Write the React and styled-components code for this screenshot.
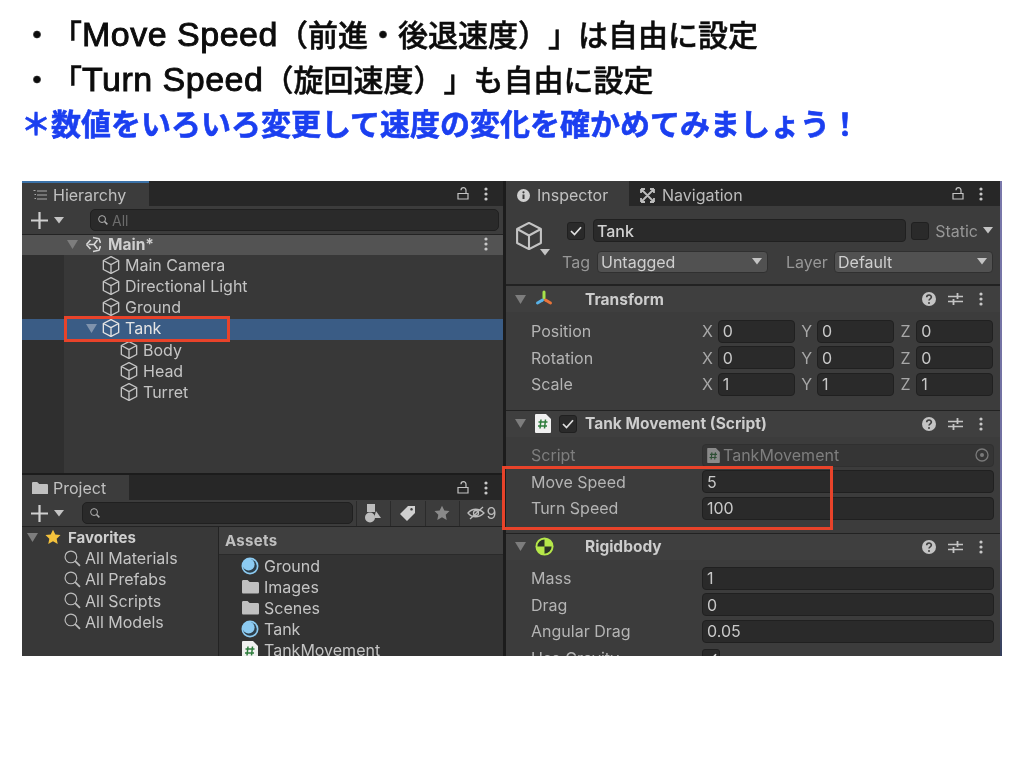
import React from 'react'
import styled, { createGlobalStyle } from 'styled-components'

const Global = createGlobalStyle`
  html, body { margin: 0; padding: 0; background: #fff; }
  body { width: 1024px; height: 768px; overflow: hidden; }
`

const Page = styled.div`
  display: flex;
  flex-direction: column;
  width: 1024px;
  height: 768px;
  padding: 11px 22px 0;
  box-sizing: border-box;
`

const Notes = styled.div`
  height: 170px;
  font-family: "Noto Sans CJK JP", sans-serif;
  font-size: 30px;
  line-height: 44.3px;
  font-weight: 500;
  color: #0c0c0c;
  white-space: nowrap;
  text-spacing-trim: space-all;
  filter: blur(0.3px);
`

const NoteLine = styled.div`
  -webkit-text-stroke: 0.5px #0c0c0c;
`

const Latin = styled.span`
  font-family: "Liberation Sans", sans-serif;
  font-size: 34px;
  letter-spacing: 0.5px;
  -webkit-text-stroke: 0.9px #0c0c0c;
`

const BlueLine = styled.div`
  margin-top: -2px;
  margin-left: -1px;
  font-weight: 700;
  color: #1b3ff0;
  -webkit-text-stroke: 0.6px #1b3ff0;
`

const Editor = styled.div`
  display: grid;
  grid-template-columns: 481px 3px 494px 2px;
  width: 980px;
  height: 475px;
  overflow: hidden;
  background: #191919;
  font-family: Inter, "Liberation Sans", sans-serif;
  font-size: 16px;
  color: #c4c4c4;
  filter: blur(0.4px);
`

const Column = styled.div`
  display: flex;
  flex-direction: column;
  min-width: 0;
`

const Splitter = styled.div`
  background: #1c1c1c;
`

const RightEdge = styled.div`
  background: linear-gradient(180deg, #7a78ab 0%, #6f6e9e 70%, #2f3a55 100%);
`

const TabBar = styled.div`
  display: flex;
  align-items: stretch;
  height: 25px;
  flex: none;
  background: #272727;
  border-top: ${p => (p.$line ? '2px solid #1c1c1c' : '0')};
`

const Tab = styled.div`
  display: flex;
  align-items: center;
  gap: ${p => p.$gap || 5}px;
  width: ${p => p.$w}px;
  padding-left: ${p => p.$pad || 10}px;
  padding-top: ${p => p.$pt || 1}px;
  box-sizing: border-box;
  background: ${p => (p.$active ? '#3c3c3c' : 'transparent')};
  border-top: ${p => (p.$blue ? '2px solid #3b72a8' : '0')};
  color: ${p => (p.$active ? '#c0c0c0' : '#bcbcbc')};
  font-size: 16px;
`

const TabActions = styled.div`
  display: flex;
  align-items: center;
  gap: 15px;
  margin-left: auto;
  padding-right: ${p => p.$pr || 15}px;
`

const ToolBar = styled.div`
  display: flex;
  align-items: center;
  height: ${p => p.$h}px;
  flex: none;
  background: #3c3c3c;
  border-bottom: 1px solid #232323;
  box-sizing: border-box;
`

const AddButton = styled.div`
  display: flex;
  align-items: center;
  gap: 6px;
  width: ${p => p.$w}px;
  padding-left: 9px;
  box-sizing: border-box;
  flex: none;
`

const Search = styled.div`
  display: flex;
  align-items: center;
  gap: 4px;
  flex: 1;
  height: 20px;
  padding-left: 7px;
  margin-right: ${p => p.$mr}px;
  background: #2a2a2a;
  border: 1px solid #202020;
  border-radius: 5px;
  color: #6c6c6c;
  font-size: 14px;
`

const ToolIcon = styled.div`
  display: flex;
  align-items: center;
  justify-content: center;
  gap: 2px;
  width: ${p => p.$w || 34.5}px;
  height: 25px;
  box-sizing: border-box;
  flex: none;
  border-left: 1px solid #2b2b2b;
  color: #bbb;
`

const Tree = styled.div`
  height: 218px;
  flex: none;
  background: linear-gradient(90deg, #2f2f2f 42px, #383838 42px);
`

const SceneRow = styled.div`
  display: flex;
  align-items: center;
  height: 20px;
  padding-left: 45px;
  padding-bottom: 2px;
  box-sizing: border-box;
  gap: 7px;
  background: #535353;
  font-weight: 700;
  font-size: 15.5px;
  color: #cfcfcf;
`

const TreeRow = styled.div`
  position: relative;
  display: flex;
  align-items: center;
  height: 21.2px;
  padding-left: ${p => p.$indent}px;
  padding-bottom: 1.5px;
  box-sizing: border-box;
  gap: 5px;
  background: ${p => (p.$selected ? '#3a5c85' : 'transparent')};
  color: ${p => (p.$selected ? '#e4e4e4' : '#c4c4c4')};
`

const Highlight = styled.div`
  position: absolute;
  left: ${p => p.$l}px;
  top: ${p => p.$t}px;
  width: ${p => p.$w}px;
  height: ${p => p.$h}px;
  box-sizing: border-box;
  border: 3px solid #e8432a;
  pointer-events: none;
  z-index: 3;
`

const Project = styled.div`
  display: grid;
  grid-template-columns: 197px 1fr;
  flex: 1;
  min-height: 0;
  background: #383838;
`

const Favorites = styled.div`
  position: relative;
  background: #383838;
  border-right: 1px solid #232323;
`

const FavoriteHead = styled.div`
  display: flex;
  align-items: center;
  height: 20.6px;
  padding-left: 5px;
  gap: 7px;
  font-weight: 700;
  font-size: 15px;
  color: #cfcfcf;
`

const FavoriteRow = styled.div`
  display: flex;
  align-items: center;
  height: 21.2px;
  padding-left: 42px;
  gap: 4px;
`

const FavoriteFoot = styled.div`
  position: absolute;
  left: 0;
  right: 0;
  bottom: 0;
  height: 3px;
  background: #4a4a4a;
`

const AssetsHead = styled.div`
  display: flex;
  align-items: center;
  height: 28px;
  padding-left: 6px;
  background: #3f3f3f;
  border-bottom: 1px solid #2a2a2a;
  box-sizing: border-box;
  font-weight: 700;
  font-size: 15px;
  letter-spacing: 0.3px;
  color: #c0c0c0;
`

const AssetList = styled.div`
  height: 110px;
  background: #333;
`

const AssetRow = styled.div`
  display: flex;
  align-items: center;
  height: 21.2px;
  padding-left: 22px;
  gap: 5px;
`

const AssetIcon = styled.div`
  display: flex;
  justify-content: center;
  width: 18px;
  flex: none;
`

const Inspector = styled.div`
  flex: 1;
  background: #3c3c3c;
`

const ObjectHead = styled.div`
  display: flex;
  height: 79px;
  padding: 13px 7px 0 9px;
  box-sizing: border-box;
  border-bottom: 1px solid #222;
`

const ObjectIcon = styled.div`
  position: relative;
  width: 52px;
  height: 28px;
  margin-top: 3px;
  flex: none;
  color: #c4c4c4;
`

const IconCaret = styled.div`
  position: absolute;
  left: 25px;
  top: 27px;
`

const ObjectFields = styled.div`
  display: flex;
  flex-direction: column;
  flex: 1;
  gap: 8px;
`

const FieldLine = styled.div`
  display: flex;
  align-items: center;
  height: 23px;
`

const Check = styled.div`
  display: flex;
  align-items: center;
  justify-content: center;
  width: 18px;
  height: 18px;
  flex: none;
  background: #2a2a2a;
  border: 1px solid #202020;
  border-radius: 3px;
  box-sizing: border-box;
`

const NameInput = styled.div`
  display: flex;
  align-items: center;
  flex: 1;
  height: 23px;
  margin: 0 5px 0 8px;
  padding-left: 3px;
  background: #2a2a2a;
  border: 1px solid #202020;
  border-radius: 4px;
  box-sizing: border-box;
  font-weight: 500;
  color: #d2d2d2;
`

const Faint = styled.span`
  color: #979797;
  width: ${p => (p.$w ? `${p.$w}px` : 'auto')};
  margin-left: ${p => p.$ml || 0}px;
  margin-right: ${p => p.$mr || 0}px;
  flex: none;
`

const Dropdown = styled.div`
  display: flex;
  align-items: center;
  justify-content: space-between;
  width: ${p => p.$w}px;
  height: 22px;
  padding: 0 5px 0 3px;
  flex: none;
  background: #515151;
  border: 1px solid #303030;
  border-radius: 4px;
  box-sizing: border-box;
  color: #cfcfcf;
`

const CompHead = styled.div`
  display: flex;
  align-items: center;
  height: 27px;
  padding-left: 9px;
  background: #3f3f3f;
  border-top: 1px solid #222;
  box-sizing: border-box;
  font-weight: 700;
  font-size: 15.5px;
  color: #cdcdcd;
`

const CompIcons = styled.div`
  display: flex;
  align-items: center;
  width: 22px;
  gap: 8px;
  margin-left: 9px;
`

const CompTitle = styled.span`
  margin-left: 28px;
`

const CompActions = styled.div`
  display: flex;
  align-items: center;
  gap: 12px;
  margin-left: auto;
  padding-right: 17px;
`

const ActionDots = styled.div`
  margin-left: 4px;
`

const Body = styled.div`
  display: flex;
  flex-direction: column;
  gap: 3.5px;
  padding: ${p => p.$top}px 6px ${p => p.$bottom}px 25px;
`

const Prop = styled.div`
  display: grid;
  grid-template-columns: 171px 1fr;
  align-items: center;
  height: 23px;
  color: ${p => (p.$dim ? '#7e7e7e' : '#b4b4b4')};
`

const Group = styled.div`
  position: relative;
  display: flex;
  flex-direction: column;
  gap: 3.5px;
`

const ValueBox = styled.div`
  display: flex;
  align-items: center;
  justify-content: space-between;
  height: 23px;
  padding: 0 4px;
  background: ${p => (p.$dim ? '#353535' : '#2a2a2a')};
  border: 1px solid ${p => (p.$dim ? '#303030' : '#202020')};
  border-radius: 4px;
  box-sizing: border-box;
  color: ${p => (p.$dim ? '#7e7e7e' : '#c8c8c8')};
`

const Vector = styled.div`
  display: grid;
  grid-template-columns: repeat(3, 15.7px 83.6px);
  align-items: center;
`

const Axis = styled.span`
  color: #a8a8a8;
`

const VectorBox = styled(ValueBox)`
  width: 77px;
`

const ScriptName = styled.div`
  display: flex;
  align-items: center;
  gap: 3px;
`

const Stroke = styled.svg`
  display: block;
  flex: none;
`

const Cube = ({ size = 18 }) => (
  <Stroke width={size} height={size} viewBox="1.300 1 15.400 16" fill="none" stroke="currentColor" strokeWidth="1.200" strokeLinejoin="round">
    <path d="M9 1.500 15.800 5v8L9 16.500 2.200 13V5z" />
    <path d="M2.200 5 9 8.700 15.800 5M9 8.700v7.800" />
  </Stroke>
)

const Caret = ({ color = '#7d7d7d', size = 11 }) => (
  <Stroke width={size} height={size} viewBox="0 0 10 10">
    <path d="M0 1h10L5 9z" fill={color} />
  </Stroke>
)

const MiniCaret = ({ color = '#c4c4c4' }) => (
  <Stroke width="10" height="7" viewBox="0 0 10 7">
    <path d="M0 0h10L5 6.500z" fill={color} />
  </Stroke>
)

const Lock = () => (
  <Stroke width="12" height="13" viewBox="0 0 12 13" fill="none" stroke="#c4c4c4" strokeWidth="1.200">
    <path d="M1 6.500h10v5.500H1z" />
    <path d="M9 6.500V3.200a2.500 2.500 0 0 0-5 0" />
  </Stroke>
)

const Dots = () => (
  <Stroke width="4" height="14" viewBox="0 0 4 14" fill="#c8c8c8">
    <circle cx="2" cy="2" r="1.600" />
    <circle cx="2" cy="7" r="1.600" />
    <circle cx="2" cy="12" r="1.600" />
  </Stroke>
)

const Plus = () => (
  <Stroke width="17" height="17" viewBox="0 0 17 17" fill="#d0d0d0">
    <path d="M7.400 0h2.200v7.400H17v2.200H9.600V17H7.400V9.600H0V7.400h7.400z" />
  </Stroke>
)

const Glass = ({ size = 10, color = '#b0b0b0', weight = 1.600 }) => (
  <Stroke width={size} height={size} viewBox="0 0 16 16" fill="none" stroke={color} strokeWidth={weight}>
    <circle cx="6.500" cy="6.500" r="5.500" />
    <path d="M10.500 10.500 15 15" strokeWidth={weight * 1.500} />
  </Stroke>
)

const ListIcon = () => (
  <Stroke width="14" height="12" viewBox="0 0 14 12" stroke="#aaa" strokeWidth="1.200">
    <path d="M4 2h10M4 6h10M4 10h10M0.500 1.500h2M1.500 5.500h1.500M1.500 9.500h1.500" />
  </Stroke>
)

const Folder = ({ size = 16, color = '#c0c0c0' }) => (
  <Stroke width={size} height={size * 0.8} viewBox="0 0 20 16">
    <path d="M0 1.500C0 .7.700 0 1.500 0h5l2.500 2.500h9.500c.8 0 1.500.7 1.500 1.500v10.500c0 .8-.7 1.500-1.500 1.500h-17C.7 16 0 15.300 0 14.500z" fill={color} />
  </Stroke>
)

const ScriptFile = ({ w = 16, h = 19, paper = '#f0f0f0', ink = '#2e7d3c' }) => (
  <Stroke width={w} height={h} viewBox="0 0 16 19">
    <path d="M1 0h10l5 5v13a1 1 0 0 1-1 1H1a1 1 0 0 1-1-1V1a1 1 0 0 1 1-1z" fill={paper} />
    <path d="M6 5.500 5 14.500M10.500 5.500 9.500 14.500M3.500 8h9M3 12h9" stroke={ink} strokeWidth="1.500" fill="none" />
  </Stroke>
)

const PrefabBall = () => (
  <Stroke width="18" height="18" viewBox="0 0 18 18">
    <circle cx="9" cy="9" r="8.500" fill="#8ccbf2" />
    <circle cx="9" cy="9" r="6.800" fill="#2d3e4a" />
    <circle cx="7.600" cy="7.600" r="6" fill="#8ccbf2" />
  </Stroke>
)

const Star = ({ size = 16, color = '#f4c23c' }) => (
  <Stroke width={size} height={size} viewBox="0 0 20 20">
    <path d="m10 .8 2.900 6 6.500.8-4.800 4.500 1.300 6.500L10 15.400 4.100 18.600l1.300-6.500L.6 7.600l6.500-.8z" fill={color} />
  </Stroke>
)

const UnityMark = () => (
  <Stroke width="16" height="17" viewBox="0 0 16 17" fill="none" stroke="#d8d8d8" strokeWidth="1.600" strokeLinejoin="round">
    <path d="M1.500 8.500 5.500 4M8 1.500l6 1.200 1.500 4.300M15.500 10 14 14.300l-6 1.200M5.500 13l-4-4.500" />
    <path d="M3.500 8.500H9l3.500-4.500M9 8.500l3.500 4.500" />
  </Stroke>
)

const Help = () => (
  <Stroke width="14" height="14" viewBox="0 0 14 14">
    <circle cx="7" cy="7" r="7" fill="#c4c4c4" />
    <path d="M4.700 5.300c0-3 4.700-3 4.700-.2 0 1.700-2.400 1.700-2.400 3.400" stroke="#3f3f3f" strokeWidth="1.600" fill="none" />
    <circle cx="7" cy="11" r="1" fill="#3f3f3f" />
  </Stroke>
)

const Sliders = () => (
  <Stroke width="15" height="14" viewBox="0 0 15 14" stroke="#c4c4c4" strokeWidth="1.300">
    <path d="M0 4.500h15M0 9.500h15" />
    <path d="M9.500 1v6M5.500 7v6" strokeWidth="1.800" />
  </Stroke>
)

const Tick = ({ color = '#e0e0e0' }) => (
  <Stroke width="12" height="10" viewBox="0 0 12 10" fill="none" stroke={color} strokeWidth="1.700">
    <path d="m1 5 3.500 3.500L11 1.200" />
  </Stroke>
)

const TransformIcon = () => (
  <Stroke width="18" height="18" viewBox="0 0 18 18" fill="none" strokeWidth="3" strokeLinecap="round">
    <path d="M9 2v6" stroke="#a6e34a" />
    <path d="M7.500 10 2.500 13" stroke="#58b2e8" />
    <path d="M10.500 10 15.500 13" stroke="#e8743a" />
  </Stroke>
)

const RigidbodyIcon = () => (
  <Stroke width="19" height="19" viewBox="0 0 20 20">
    <circle cx="10" cy="10" r="9.500" fill="#b6e84a" />
    <path d="M10 2.500A7.500 7.500 0 0 0 2.500 10H10zM10 17.500A7.500 7.500 0 0 0 17.500 10H10z" fill="#2b3327" />
  </Stroke>
)

const NavIcon = () => (
  <Stroke width="15" height="15" viewBox="0 0 15 15" stroke="#bdbdbd" strokeWidth="1.800" fill="none">
    <path d="M1 1h4M1 1v4M14 14h-4M14 14v-4M14 1h-4M14 1v4M1 14h4M1 14v-4M1 1l13 13M14 1 1 14" />
  </Stroke>
)

const InfoIcon = () => (
  <Stroke width="13" height="13" viewBox="0 0 13 13">
    <circle cx="6.500" cy="6.500" r="6.500" fill="#d0d0d0" />
    <path d="M6.500 5.500v4.500" stroke="#3c3c3c" strokeWidth="2" />
    <circle cx="6.500" cy="3.300" r="1.100" fill="#3c3c3c" />
  </Stroke>
)

const ShapesIcon = () => (
  <Stroke width="18" height="19" viewBox="0 0 18 19" fill="#bdbdbd">
    <rect x="3" y="0" width="8" height="8" />
    <circle cx="6" cy="13.500" r="5" />
    <path d="M12 7l5 7h-7z" />
  </Stroke>
)

const TagIcon = () => (
  <Stroke width="15" height="15" viewBox="0 0 15 15" fill="#d0d0d0">
    <path d="M8 0h7v7l-8 8-7-7zM11.500 2a1.300 1.300 0 1 0 .01 0z" fillRule="evenodd" />
  </Stroke>
)

const EyeOff = () => (
  <Stroke width="18" height="14" viewBox="0 0 18 14" fill="none" stroke="#bdbdbd" strokeWidth="1.300">
    <path d="M1 7c4-5 11-5 16 0-5 5-12 5-16 0z" />
    <circle cx="9" cy="7" r="2.500" />
    <path d="M3 13 16 1" />
  </Stroke>
)

const TargetIcon = () => (
  <Stroke width="14" height="14" viewBox="0 0 14 14" fill="none" stroke="#7a7a7a" strokeWidth="1.300">
    <circle cx="7" cy="7" r="6" />
    <circle cx="7" cy="7" r="2" fill="#7a7a7a" stroke="none" />
  </Stroke>
)

const hierarchy = [
  { name: 'Main Camera', indent: 80 },
  { name: 'Directional Light', indent: 80 },
  { name: 'Ground', indent: 80 },
  { name: 'Tank', indent: 64, selected: true, open: true },
  { name: 'Body', indent: 98 },
  { name: 'Head', indent: 98 },
  { name: 'Turret', indent: 98 },
]

const favorites = ['All Materials', 'All Prefabs', 'All Scripts', 'All Models']

const assets = [
  { name: 'Ground', icon: <PrefabBall /> },
  { name: 'Images', icon: <Folder size={17} /> },
  { name: 'Scenes', icon: <Folder size={17} /> },
  { name: 'Tank', icon: <PrefabBall /> },
  { name: 'TankMovement', icon: <ScriptFile /> },
]

const transformRows = [
  { label: 'Position', values: ['0', '0', '0'] },
  { label: 'Rotation', values: ['0', '0', '0'] },
  { label: 'Scale', values: ['1', '1', '1'] },
]

const rigidRows = [
  { label: 'Mass', value: '1' },
  { label: 'Drag', value: '0' },
  { label: 'Angular Drag', value: '0.05' },
]

const HeadActions = () => (
  <CompActions>
    <Help />
    <Sliders />
    <ActionDots>
      <Dots />
    </ActionDots>
  </CompActions>
)

export default function App() {
  return (
    <Page>
      <Global />
      <Notes>
        <NoteLine>・「<Latin>Move Speed</Latin>（前進・後退速度）」は自由に設定</NoteLine>
        <NoteLine>・「<Latin>Turn Speed</Latin>（旋回速度）」も自由に設定</NoteLine>
        <BlueLine>＊数値をいろいろ変更して速度の変化を確かめてみましょう！</BlueLine>
      </Notes>
      <Editor>
        <Column>
          <TabBar>
            <Tab $w={127} $active $blue $pad={11} $gap={6}>
              <ListIcon />
              Hierarchy
            </Tab>
            <TabActions>
              <Lock />
              <Dots />
            </TabActions>
          </TabBar>
          <ToolBar $h={29}>
            <AddButton $w={68}>
              <Plus />
              <MiniCaret />
            </AddButton>
            <Search $mr={4}>
              <Glass />
              All
            </Search>
          </ToolBar>
          <SceneRow>
            <Caret />
            <UnityMark />
            Main*
            <TabActions>
              <Dots />
            </TabActions>
          </SceneRow>
          <Tree>
            {hierarchy.map(row => (
              <TreeRow key={row.name} $indent={row.indent} $selected={row.selected}>
                {row.open && <Caret color="#7f93ad" />}
                <Cube />
                {row.name}
                {row.selected && <Highlight $l={42} $t={-3} $w={166} $h={26} />}
              </TreeRow>
            ))}
          </Tree>
          <TabBar $line>
            <Tab $w={107} $active>
              <Folder size={16} />
              Project
            </Tab>
            <TabActions>
              <Lock />
              <Dots />
            </TabActions>
          </TabBar>
          <ToolBar $h={27}>
            <AddButton $w={60}>
              <Plus />
              <MiniCaret />
            </AddButton>
            <Search $mr={3}>
              <Glass />
            </Search>
            <ToolIcon>
              <ShapesIcon />
            </ToolIcon>
            <ToolIcon>
              <TagIcon />
            </ToolIcon>
            <ToolIcon>
              <Star color="#8a8a8a" />
            </ToolIcon>
            <ToolIcon $w={44}>
              <EyeOff />9
            </ToolIcon>
          </ToolBar>
          <Project>
            <Favorites>
              <FavoriteHead>
                <Caret />
                <Star />
                Favorites
              </FavoriteHead>
              {favorites.map(name => (
                <FavoriteRow key={name}>
                  <Glass size={17} color="#bcbcbc" weight={1.100} />
                  {name}
                </FavoriteRow>
              ))}
              <FavoriteFoot />
            </Favorites>
            <Column>
              <AssetsHead>Assets</AssetsHead>
              <AssetList>
                {assets.map(asset => (
                  <AssetRow key={asset.name}>
                    <AssetIcon>{asset.icon}</AssetIcon>
                    {asset.name}
                  </AssetRow>
                ))}
              </AssetList>
            </Column>
          </Project>
        </Column>
        <Splitter />
        <Column>
          <TabBar>
            <Tab $w={123} $active $pad={11} $gap={7} $pt={3}>
              <InfoIcon />
              Inspector
            </Tab>
            <Tab $w={150} $pad={11} $gap={7} $pt={3}>
              <NavIcon />
              Navigation
            </Tab>
            <TabActions $pr={17}>
              <Lock />
              <Dots />
            </TabActions>
          </TabBar>
          <Inspector>
            <ObjectHead>
              <ObjectIcon>
                <Cube size={28} />
                <IconCaret>
                  <MiniCaret />
                </IconCaret>
              </ObjectIcon>
              <ObjectFields>
                <FieldLine>
                  <Check>
                    <Tick />
                  </Check>
                  <NameInput>Tank</NameInput>
                  <Check />
                  <Faint $ml={6} $mr={5}>Static</Faint>
                  <MiniCaret />
                </FieldLine>
                <FieldLine>
                  <Faint $w={35} $ml={-5}>Tag</Faint>
                  <Dropdown $w={171}>
                    Untagged
                    <MiniCaret />
                  </Dropdown>
                  <Faint $w={48} $ml={18}>Layer</Faint>
                  <Dropdown $w={159}>
                    Default
                    <MiniCaret />
                  </Dropdown>
                </FieldLine>
              </ObjectFields>
            </ObjectHead>
            <CompHead>
              <Caret />
              <CompIcons>
                <TransformIcon />
              </CompIcons>
              <CompTitle>Transform</CompTitle>
              <HeadActions />
            </CompHead>
            <Body $top={7.5} $bottom={14}>
              {transformRows.map(row => (
                <Prop key={row.label}>
                  {row.label}
                  <Vector>
                    {row.values.map((value, i) => (
                      <React.Fragment key={i}>
                        <Axis>{'XYZ'[i]}</Axis>
                        <VectorBox>{value}</VectorBox>
                      </React.Fragment>
                    ))}
                  </Vector>
                </Prop>
              ))}
            </Body>
            <CompHead>
              <Caret />
              <CompIcons>
                <ScriptFile />
                <Check>
                  <Tick />
                </Check>
              </CompIcons>
              <CompTitle>Tank Movement (Script)</CompTitle>
              <HeadActions />
            </CompHead>
            <Body $top={7} $bottom={13}>
              <Prop $dim>
                Script
                <ValueBox $dim>
                  <ScriptName>
                    <ScriptFile w={13} h={15} paper="#8a8a8a" ink="#2f4f35" />
                    TankMovement
                  </ScriptName>
                  <TargetIcon />
                </ValueBox>
              </Prop>
              <Group>
                <Prop>
                  Move Speed
                  <ValueBox>5</ValueBox>
                </Prop>
                <Prop>
                  Turn Speed
                  <ValueBox>100</ValueBox>
                </Prop>
                <Highlight $l={-29} $t={-4} $w={331} $h={64} />
              </Group>
            </Body>
            <CompHead>
              <Caret />
              <CompIcons>
                <RigidbodyIcon />
              </CompIcons>
              <CompTitle>Rigidbody</CompTitle>
              <HeadActions />
            </CompHead>
            <Body $top={7} $bottom={0}>
              {rigidRows.map(row => (
                <Prop key={row.label}>
                  {row.label}
                  <ValueBox>{row.value}</ValueBox>
                </Prop>
              ))}
              <Prop>
                Use Gravity
                <Check>
                  <Tick />
                </Check>
              </Prop>
            </Body>
          </Inspector>
        </Column>
        <RightEdge />
      </Editor>
    </Page>
  )
}
